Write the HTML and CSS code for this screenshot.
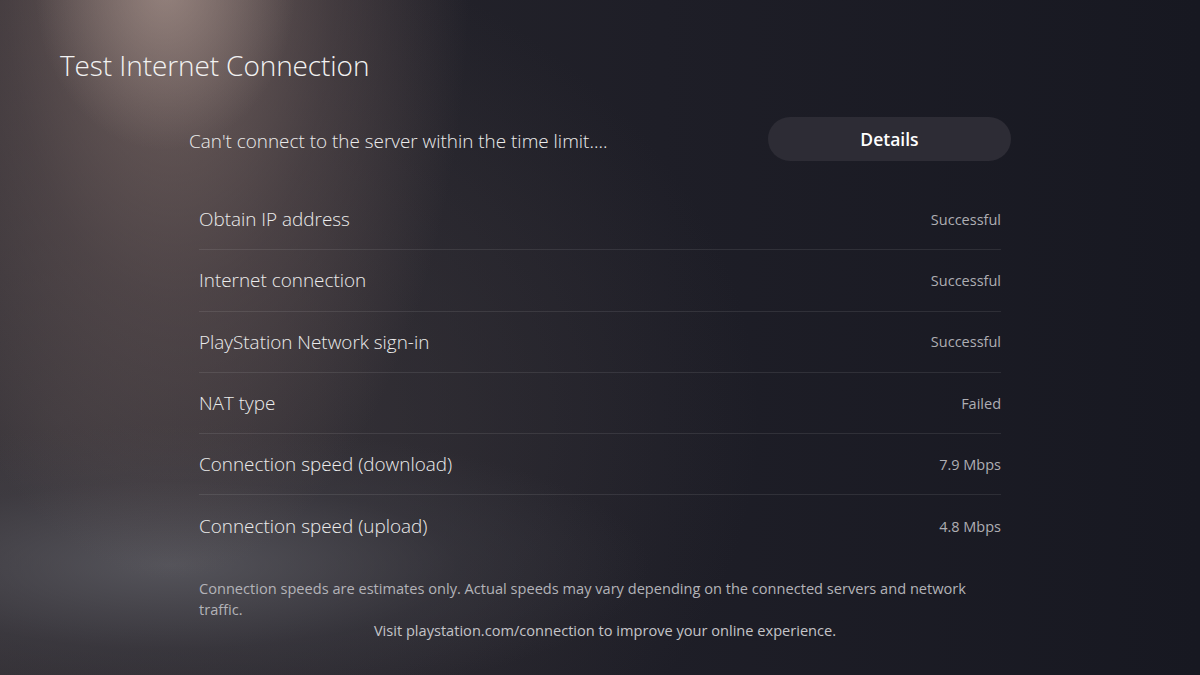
FILE: index.html
```html
<!DOCTYPE html>
<html>
<head>
<meta charset="utf-8">
<link rel="stylesheet" href="styles.css">
</head>
<body>
<div class="screen">
  <h1 class="title">Test Internet Connection</h1>
  <div class="content">
    <div class="status">
      <p class="message">Can't connect to the server within the time limit....</p>
      <div class="button">Details</div>
    </div>
    <ul class="results">
      <li class="row"><span class="label">Obtain IP address</span><span class="value">Successful</span></li>
      <li class="row"><span class="label">Internet connection</span><span class="value">Successful</span></li>
      <li class="row"><span class="label">PlayStation Network sign-in</span><span class="value">Successful</span></li>
      <li class="row"><span class="label">NAT type</span><span class="value">Failed</span></li>
      <li class="row"><span class="label">Connection speed (download)</span><span class="value">7.9 Mbps</span></li>
      <li class="row"><span class="label">Connection speed (upload)</span><span class="value">4.8 Mbps</span></li>
    </ul>
    <p class="note">Connection speeds are estimates only. Actual speeds may vary depending on the connected servers and network traffic.</p>
    <p class="visit">Visit playstation.com/connection to improve your online experience.</p>
  </div>
</div>
</body>
</html>
```
FILE: styles.css
```css
* { box-sizing: border-box; }
html, body { margin: 0; padding: 0; }
body {
  width: 1200px;
  height: 675px;
  overflow: hidden;
  font-family: "Open Sans", "Noto Sans", sans-serif;
  background-color: #1b1b25;
}
.screen {
  width: 1200px;
  height: 675px;
  padding-top: 46px;
  background:
    radial-gradient(ellipse 130px 160px at 165px -10px, rgba(175,155,148,0.55), rgba(175,155,148,0) 100%),
    radial-gradient(ellipse 300px 620px at 170px -40px, rgba(140,118,112,0.75), rgba(120,100,98,0.35) 55%, rgba(80,70,72,0) 100%),
    radial-gradient(ellipse 480px 140px at 170px 565px, rgba(95,95,102,0.75), rgba(70,70,78,0.3) 60%, rgba(60,60,68,0) 100%),
    radial-gradient(ellipse 700px 520px at 60px 420px, rgba(70,64,68,0.7), rgba(50,48,54,0) 100%),
    linear-gradient(90deg, #2a282e 0%, #1e1e27 55%, #171821 100%);
}
.title {
  margin: 0 0 0 60px;
  font-size: 28px;
  line-height: 38px;
  font-weight: 300;
  color: #f2f2f2;
  letter-spacing: -0.1px;
}
.content {
  margin-left: 189px;
  width: 822px;
}
.status {
  display: flex;
  align-items: center;
  justify-content: space-between;
  margin-top: 33px;
  height: 44px;
}
.message {
  margin: 0;
  font-size: 18.9px;
  font-weight: 300;
  color: #ececec;
  padding-top: 4px;
}
.button {
  width: 243px;
  height: 44px;
  border-radius: 22px;
  background: #2d2c35;
  color: #ffffff;
  font-weight: 600;
  font-size: 17.5px;
  display: flex;
  align-items: center;
  justify-content: center;
}
.results {
  list-style: none;
  margin: 28px 0 0 0;
  padding: 0 10px;
}
.row {
  height: 61.3px;
  display: flex;
  align-items: center;
  justify-content: space-between;
  border-bottom: 1px solid rgba(255,255,255,0.09);
}
.row:last-child { border-bottom: none; }
.label {
  font-size: 18.9px;
  color: #ececec;
  font-weight: 300;
}
.value {
  font-size: 14.5px;
  color: #aeaeb3;
}
.note {
  margin: 21px 0 0 0;
  padding: 0 22px 0 10px;
  font-size: 14.6px;
  line-height: 21px;
  color: #b3b3b8;
}
.visit {
  margin: 0;
  text-align: center;
  font-size: 14.6px;
  line-height: 21px;
  color: #c4c4c8;
  padding-left: 10px;
}
```
